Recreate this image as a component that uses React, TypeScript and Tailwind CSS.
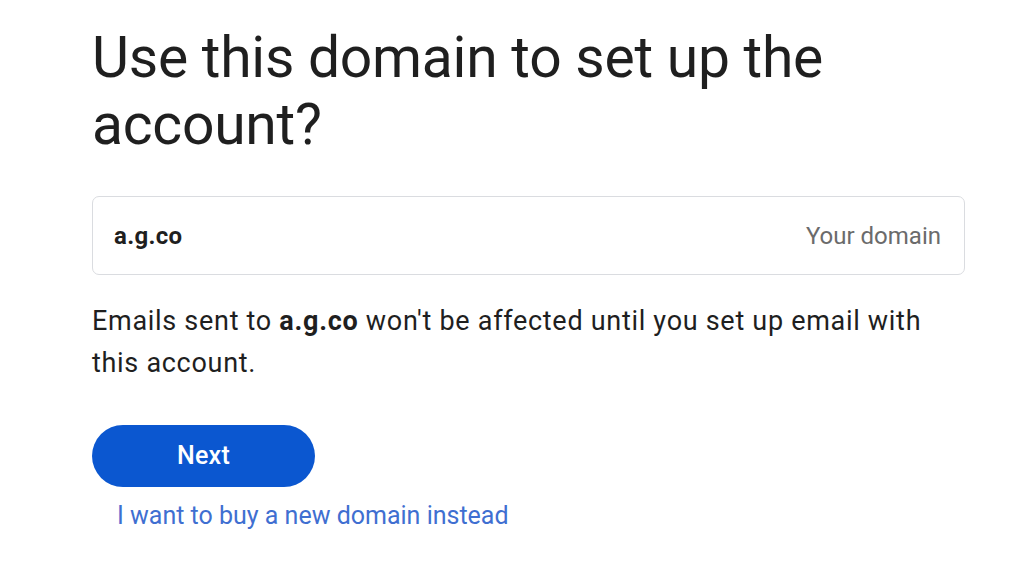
import React from 'react';

const App: React.FC = () => {
  return (
    <div
      className="w-[1024px] h-[579px] bg-white overflow-hidden"
      style={{ fontFamily: 'Roboto, "Open Sans", sans-serif' }}
    >
      <div className="pl-[92px] pr-[60px] pt-[24px]">
        <h1 className="text-[57px] leading-[67px] font-normal text-[#1f1f1f] tracking-[-0.25px] w-[790px]">
          Use this domain to set up the account?
        </h1>

        <div className="mt-[38px] w-[873px] h-[79px] border border-[#dadce0] rounded-[7px] flex items-center justify-between pl-[21px] pr-[23px]">
          <span className="text-[24px] font-bold text-[#1f1f1f] tracking-[0.3px]">a.g.co</span>
          <span className="text-[24px] text-[#6b6b6b]">Your domain</span>
        </div>

        <p className="mt-[25px] text-[27px] leading-[42px] text-[#1f1f1f] tracking-[0.7px] w-[850px]">
          Emails sent to <span className="font-bold">a.g.co</span> won't be affected until you set up email with this account.
        </p>

        <button className="mt-[41px] w-[223px] h-[62px] rounded-full bg-[#0b57d0] text-white text-[25px] font-medium tracking-[0.3px]">
          Next
        </button>

        <div className="mt-[13px] pl-[25px] leading-[32px]">
          <a href="#" className="text-[25px] text-[#3f6fd1]">
            I want to buy a new domain instead
          </a>
        </div>
      </div>
    </div>
  );
};

export default App;
